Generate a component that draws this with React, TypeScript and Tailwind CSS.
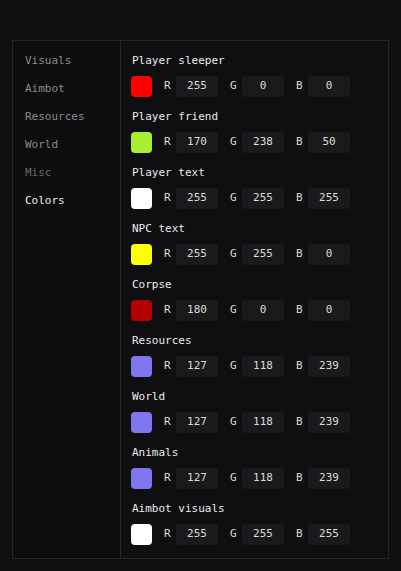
import React from "react";

type ColorEntry = { label: string; r: number; g: number; b: number };

const tabs = ["Visuals", "Aimbot", "Resources", "World", "Misc", "Colors"];

const colors: ColorEntry[] = [
  { label: "Player sleeper", r: 255, g: 0, b: 0 },
  { label: "Player friend", r: 170, g: 238, b: 50 },
  { label: "Player text", r: 255, g: 255, b: 255 },
  { label: "NPC text", r: 255, g: 255, b: 0 },
  { label: "Corpse", r: 180, g: 0, b: 0 },
  { label: "Resources", r: 127, g: 118, b: 239 },
  { label: "World", r: 127, g: 118, b: 239 },
  { label: "Animals", r: 127, g: 118, b: 239 },
  { label: "Aimbot visuals", r: 255, g: 255, b: 255 },
];

function Channel({ name, value }: { name: string; value: number }) {
  return (
    <div className="flex items-center">
      <span className="w-[12px] text-[#dcdcdc]">{name}</span>
      <div className="flex h-[21px] w-[42px] items-center justify-center rounded-[3px] bg-[#1a191c] text-[#dcdcdc]">
        {value}
      </div>
    </div>
  );
}

function ColorRow({ entry }: { entry: ColorEntry }) {
  return (
    <div className="flex flex-col">
      <div className="h-[16px] pl-[1px] pt-[1px] leading-[16px] text-[#ececec]">{entry.label}</div>
      <div className="mt-[8px] flex items-center gap-[12px]">
        <div
          className="h-[21px] w-[21px] rounded-[4px]"
          style={{ backgroundColor: `rgb(${entry.r}, ${entry.g}, ${entry.b})` }}
        />
        <Channel name="R" value={entry.r} />
        <Channel name="G" value={entry.g} />
        <Channel name="B" value={entry.b} />
      </div>
    </div>
  );
}

export default function App() {
  return (
    <div
      className="h-[571px] w-[401px] bg-[#0f0e11] pl-[12px] pt-[40px] text-[11px]"
      style={{ fontFamily: '"DejaVu Sans Mono", monospace' }}
    >
      <div className="flex h-[519px] w-[377px] border border-[#262528] bg-[#0d0c0f]">
        <aside className="flex w-[108px] flex-col gap-[12px] border-r border-[#262528] pl-[12px] pt-[12px]">
          {tabs.map((t) => (
            <div
              key={t}
              className={
                "h-[16px] leading-[16px] " +
                (t === "Colors" ? "text-[#ececec]" : t === "Misc" ? "text-[#6a6a6a]" : "text-[#8c8c8c]")
              }
            >
              {t}
            </div>
          ))}
        </aside>
        <section className="flex flex-1 flex-col gap-[11px] bg-[#0f0e11] pl-[10px] pt-[11px]">
          {colors.map((c) => (
            <ColorRow key={c.label} entry={c} />
          ))}
        </section>
      </div>
    </div>
  );
}
